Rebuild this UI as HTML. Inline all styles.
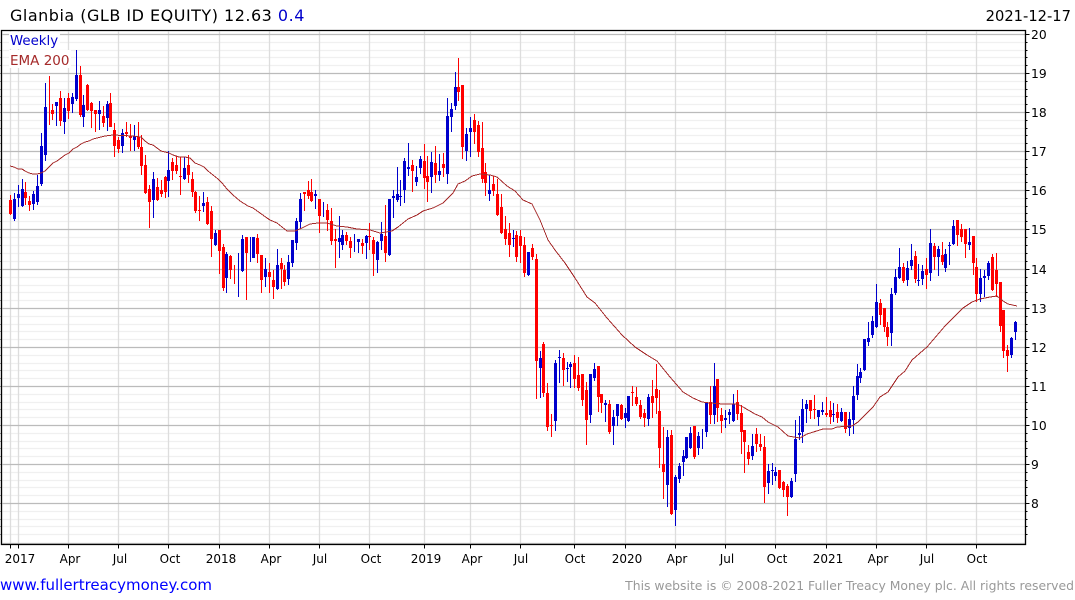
<!DOCTYPE html>
<html><head><meta charset="utf-8"><title>Glanbia</title>
<style>
html,body{margin:0;padding:0;background:#fff}
svg{display:block}
text{font-family:"DejaVu Sans","Liberation Sans",sans-serif}
</style></head><body>
<svg width="1075" height="600" viewBox="0 0 1075 600" xmlns="http://www.w3.org/2000/svg">
<rect width="1075" height="600" fill="#fff"/>
<g fill="none" stroke-width="1.33" transform="translate(.5 .5)">
<path stroke="#f0f0f0" d="M2 42H1025M2 50H1025M2 57H1025M2 65H1025M2 81H1025M2 89H1025M2 96H1025M2 104H1025M2 120H1025M2 128H1025M2 135H1025M2 143H1025M2 159H1025M2 167H1025M2 174H1025M2 182H1025M2 198H1025M2 206H1025M2 213H1025M2 221H1025M2 237H1025M2 245H1025M2 253H1025M2 261H1025M2 277H1025M2 285H1025M2 292H1025M2 300H1025M2 316H1025M2 324H1025M2 331H1025M2 339H1025M2 355H1025M2 363H1025M2 370H1025M2 378H1025M2 394H1025M2 402H1025M2 409H1025M2 417H1025M2 433H1025M2 441H1025M2 448H1025M2 456H1025M2 472H1025M2 480H1025M2 487H1025M2 495H1025M2 511H1025M2 519H1025M2 526H1025M2 534H1025"/>
<path stroke="#ddd" d="M10 31V543M18 31V543M68 31V543M118 31V543M168 31V543M219 31V543M269 31V543M319 31V543M369 31V543M424 31V543M470 31V543M520 31V543M574 31V543M625 31V543M675 31V543M725 31V543M775 31V543M826 31V543M876 31V543M926 31V543M976 31V543"/>
<path stroke="#bbb" d="M2 34H1025M2 73H1025M2 112H1025M2 151H1025M2 190H1025M2 229H1025M2 269H1025M2 308H1025M2 347H1025M2 386H1025M2 425H1025M2 464H1025M2 503H1025M2 543H1025"/>
</g>
<rect x="9" y="32" width="51" height="17" fill="#fff"/>
<rect x="9" y="50" width="62" height="18" fill="#fff"/>
<g shape-rendering="crispEdges" fill="none" transform="translate(.5 0)">
<path stroke="#f00" d="M10 195V215M25 182V205M29 196V211M49 76V125M52 104V120M60 91V126M68 93V119M80 66V117M87 84V111M91 102V128M95 110V132M103 106V127M110 93V127M114 123V157M118 137V153M126 122V137M130 124V151M138 122V149M141 135V175M145 155V194M149 185V228M157 178V201M161 180V197M165 176V198M172 158V180M176 156V174M180 157V195M188 155V183M192 172V197M195 191V213M199 196V221M207 197V225M211 206V257M219 230V274M223 244V291M230 255V279M234 265V284M246 237V300M257 234V263M261 255V293M269 263V293M273 270V299M281 258V289M284 265V286M304 192V211M308 181V199M311 179V202M319 199V233M327 204V231M331 208V245M335 229V268M346 232V245M350 237V258M362 239V254M369 223V250M373 237V276M385 205V262M412 160V192M424 144V189M427 156V202M435 146V183M443 153V177M458 58V101M462 85V159M474 114V144M478 121V157M482 122V183M485 163V196M493 176V196M497 179V216M501 194V234M505 216V245M509 223V257M516 231V262M520 230V263M524 237V277M532 244V260M536 254V399M543 342V397M547 383V431M551 414V437M563 353V386M574 355V388M578 357V391M582 374V406M586 382V445M598 366V412M601 394V413M609 400V434M621 404V420M632 386V406M636 387V406M640 400V419M644 409V427M652 380V418M656 364V414M659 390V468M663 427V499M671 430V515M694 426V459M710 386V424M717 379V422M721 408V433M737 390V420M741 405V454M744 430V473M748 445V465M756 428V452M760 434V451M764 436V503M779 470V489M783 481V497M787 484V516M810 400V419M814 395V419M826 397V417M830 401V424M837 404V423M845 412V433M880 299V325M884 308V332M887 322V346M903 263V283M915 251V283M926 258V289M934 243V270M942 242V265M957 220V246M961 224V242M965 229V258M973 236V275M976 258V302M992 254V291M996 253V297M1000 282V332M1003 310V358M1007 345V372"/>
<path stroke="#f00" stroke-width="3" d="M10 200V214M25 192V198M29 201V205M52 110V114M60 98V121M68 98V111M80 75V115M87 85V110M91 103V111M95 110V114M103 116V123M110 103V127M114 130V146M118 140V149M126 132V134M130 136V138M138 137V147M141 147V166M145 165V193M149 189V202M157 187V200M161 190V194M165 177V192M172 162V171M176 165V171M180 176V177M188 165V175M192 179V192M195 192V211M199 210V211M207 202V224M211 211V239M219 230V251M223 247V288M230 256V270M246 237V253M257 238V254M261 255V280M269 272V277M273 280V287M281 263V269M284 270V282M304 192V194M308 190V196M311 192V201M319 199V216M327 210V220M331 221V241M335 239V241M346 235V241M350 241V248M362 243V246M369 236V237M373 240V254M385 236V253M412 165V171M424 161V178M427 176V182M435 163V175M443 164V168M458 87V92M462 85V147M474 120V132M478 125V152M482 148V179M485 172V183M493 184V191M497 194V215M501 207V233M505 229V239M509 233V245M516 235V257M520 236V246M524 245V273M532 248V257M536 259V361M543 344V393M547 393V427M551 425V426M563 358V370M574 363V379M578 375V388M582 374V400M586 390V420M598 366V397M601 394V403M609 404V432M621 405V419M632 392V393M636 397V404M640 405V417M644 413V418M652 396V403M656 389V398M659 411V448M663 464V472M671 435V514M694 426V457M710 402V415M717 379V408M721 415V421M737 402V414M741 413V432M744 430V442M748 452V459M756 434V444M760 444V447M764 447V487M779 470V488M783 482V490M787 486V497M810 400V411M814 409V410M826 413V415M830 410V417M837 412V418M845 412V429M880 303V315M884 308V327M887 327V337M903 267V281M915 256V279M926 269V275M934 246V257M942 255V262M957 220V235M961 229V237M965 229V244M973 236V263M976 267V294M992 257V290M996 270V284M1000 282V326M1003 310V351M1007 350V356"/>
<path stroke="#00c" d="M14 193V221M18 185V207M22 179V207M33 191V210M37 175V205M41 133V186M45 83V161M56 102V126M64 98V134M72 93V113M76 50V101M83 95V127M99 101V130M107 101V131M122 129V153M134 125V151M153 172V218M168 151V197M184 157V180M203 192V212M215 230V246M226 252V293M238 253V297M242 235V272M250 237V262M253 237V258M265 258V287M277 249V290M288 255V285M292 240V267M296 218V250M300 193V229M315 190V209M323 202V217M339 216V258M342 230V250M354 234V252M358 239V253M366 235V259M377 241V273M381 222V250M389 199V256M393 190V218M397 167V202M400 180V206M404 158V203M408 143V176M416 166V186M420 156V174M431 152V193M439 154V181M447 98V184M451 103V132M455 72V110M466 128V161M470 117V157M489 175V201M513 230V247M528 252V276M540 351V398M555 360V431M559 350V383M567 362V382M570 362V388M590 374V423M594 363V381M605 400V422M613 410V445M617 404V426M625 408V428M628 396V422M648 394V426M667 430V507M675 475V526M679 463V483M683 450V476M686 437V459M690 427V449M698 432V455M702 429V449M706 402V437M714 363V424M725 410V428M729 409V424M733 394V422M752 434V460M768 464V494M772 463V485M775 467V481M791 478V498M795 420V482M799 416V440M802 399V443M806 400V423M818 410V426M822 402V415M833 403V422M841 408V422M849 412V436M853 386V434M857 364V400M860 368V383M864 339V371M868 322V346M872 316V338M876 284V328M891 288V346M895 269V295M899 248V279M907 261V286M911 244V270M918 264V286M922 265V285M930 229V281M938 246V276M945 249V272M949 242V265M953 220V245M969 228V250M980 269V302M984 270V297M988 261V280M1011 337V358M1015 321V340"/>
<path stroke="#00c" stroke-width="3" d="M14 199V219M18 194V198M22 189V206M33 194V204M37 186V202M41 146V184M45 107V155M56 102V106M64 108V122M72 97V104M76 75V99M83 105V117M99 110V114M107 104V118M122 133V146M134 136V140M153 179V200M168 170V181M184 168V179M203 203V206M215 233V245M226 254V278M242 239V271M253 237V258M265 269V277M277 265V289M288 262V279M292 240V263M296 221V243M300 199V222M315 194V196M339 238V242M342 235V245M358 239V242M366 236V243M377 242V260M381 234V241M389 199V255M393 196V198M397 194V200M400 196V197M404 161V190M408 167V169M416 177V182M420 159V168M431 162V177M439 171V175M447 116V174M451 109V117M455 87V106M466 134V151M470 128V132M489 190V194M513 238V239M528 252V275M540 358V368M555 363V421M559 357V358M567 368V369M570 364V367M590 374V415M594 369V378M605 403V405M613 417V426M617 404V416M625 413V418M628 396V421M648 397V419M667 437V485M675 477V510M679 466V479M683 456V462M686 437V458M690 433V448M698 436V448M706 403V432M714 386V415M725 418V420M729 412V415M733 404V421M752 446V456M768 471V483M772 470V471M775 472V476M791 481V497M795 439V474M799 433V435M802 409V432M806 404V409M818 410V417M822 410V412M833 414V415M841 412V421M849 419V428M853 396V420M857 376V395M860 372V378M864 339V370M868 338V342M872 321V335M876 302V327M891 294V333M895 277V293M899 267V278M907 268V280M911 260V266M918 280V281M922 271V279M930 243V273M938 249V257M945 254V268M949 245V246M953 226V244M969 242V245M980 278V294M984 276V278M988 263V276M1011 338V355M1015 322V332"/>
</g>
<g shape-rendering="crispEdges" fill="none">
<polyline stroke="#a52a2a" stroke-width="1" points="10,166 14,167 18,169 22,169 25,171 29,173 33,174 37,174 41,173 45,171 49,167 53,163 57,161 61,158 65,155 69,153 73,149 77,147 81,144 85,142 89,141 93,139 97,138 101,137 105,136 113,135 133,136 141,137 145,141 149,144 153,145 157,148 161,151 165,152 169,153 173,155 179,157 185,157 190,158 195,163 200,165 204,167 208,171 213,175 218,179 222,183 227,189 233,195 240,201 248,206 253,208 260,213 267,218 270,220 277,223 282,227 287,231 295,231 302,228 310,224 318,223 327,223 337,226 347,227 357,229 370,230 380,233 392,231 398,227 408,219 417,215 423,211 433,208 443,203 448,198 453,193 458,184 465,181 472,176 480,174 490,175 497,177 507,186 515,191 523,200 532,204 540,220 548,240 555,250 565,263 575,278 587,297 595,303 607,318 622,335 635,347 647,355 657,361 670,377 683,392 693,398 702,402 710,403 723,404 737,404 743,407 755,414 762,417 768,422 778,427 788,436 800,438 807,434 823,429 832,429 837,427 852,426 858,422 873,407 880,397 888,392 898,377 905,371 912,360 927,347 945,326 963,308 972,302 980,299 990,297 997,296 1003,301 1008,304 1017,306"/>
</g>
<g fill="none" stroke="#000" transform="translate(.5 .5)">
<path stroke-width="1.33" d="M1 30H1025V544H1V30Z"/>
<g shape-rendering="crispEdges">
<path d="M0 42H1M0 50H1M0 57H1M0 65H1M0 73H1M0 81H1M0 89H1M0 96H1M0 104H1M0 112H1M0 120H1M0 128H1M0 135H1M0 143H1M0 151H1M0 159H1M0 167H1M0 174H1M0 182H1M0 190H1M0 198H1M0 206H1M0 213H1M0 221H1M0 229H1M0 237H1M0 245H1M0 253H1M0 261H1M0 269H1M0 277H1M0 285H1M0 292H1M0 300H1M0 308H1M0 316H1M0 324H1M0 331H1M0 339H1M0 347H1M0 355H1M0 363H1M0 370H1M0 378H1M0 386H1M0 394H1M0 402H1M0 409H1M0 417H1M0 425H1M0 433H1M0 441H1M0 448H1M0 456H1M0 464H1M0 472H1M0 480H1M0 487H1M0 495H1M0 503H1M0 511H1M0 519H1M0 526H1M0 534H1"/>
<path d="M1025 34H1029M1025 73H1029M1025 112H1029M1025 151H1029M1025 190H1029M1025 229H1029M1025 269H1029M1025 308H1029M1025 347H1029M1025 386H1029M1025 425H1029M1025 464H1029M1025 503H1029"/>
<path d="M1025 42H1027M1025 50H1027M1025 57H1027M1025 65H1027M1025 81H1027M1025 89H1027M1025 96H1027M1025 104H1027M1025 120H1027M1025 128H1027M1025 135H1027M1025 143H1027M1025 159H1027M1025 167H1027M1025 174H1027M1025 182H1027M1025 198H1027M1025 206H1027M1025 213H1027M1025 221H1027M1025 237H1027M1025 245H1027M1025 253H1027M1025 261H1027M1025 277H1027M1025 285H1027M1025 292H1027M1025 300H1027M1025 316H1027M1025 324H1027M1025 331H1027M1025 339H1027M1025 355H1027M1025 363H1027M1025 370H1027M1025 378H1027M1025 394H1027M1025 402H1027M1025 409H1027M1025 417H1027M1025 433H1027M1025 441H1027M1025 448H1027M1025 456H1027M1025 472H1027M1025 480H1027M1025 487H1027M1025 495H1027M1025 511H1027M1025 519H1027M1025 526H1027M1025 534H1027"/>
<path d="M10 544V548M18 544V548M68 544V548M118 544V548M168 544V548M219 544V548M269 544V548M319 544V548M369 544V548M424 544V548M470 544V548M520 544V548M574 544V548M625 544V548M675 544V548M725 544V548M775 544V548M826 544V548M876 544V548M926 544V548M976 544V548"/>
</g>
</g>
<text x="10" y="21" font-size="16" fill="#000" letter-spacing=".5">Glanbia (GLB ID EQUITY) 12.63 <tspan fill="#00c">0.4</tspan></text>
<text x="1071" y="21" font-size="14.7" fill="#000" text-anchor="end">2021-12-17</text>
<text x="10" y="45" font-size="13.33" fill="#00c">Weekly</text>
<text x="10" y="65" font-size="13.5" fill="#a52a2a">EMA 200</text>
<g font-size="12.3" fill="#000">
<text x="1031" y="39">20</text><text x="1031" y="78">19</text><text x="1031" y="117">18</text><text x="1031" y="156">17</text><text x="1031" y="195">16</text><text x="1031" y="234">15</text><text x="1031" y="274">14</text><text x="1031" y="313">13</text><text x="1031" y="352">12</text><text x="1031" y="391">11</text><text x="1031" y="430">10</text><text x="1031" y="469">9</text><text x="1031" y="508">8</text>
</g>
<g font-size="12" fill="#000" text-anchor="middle">
<text x="20" y="563">2017</text><text x="70" y="563">Apr</text><text x="120" y="563">Jul</text><text x="170" y="563">Oct</text><text x="221" y="563">2018</text><text x="271" y="563">Apr</text><text x="320" y="563">Jul</text><text x="371" y="563">Oct</text><text x="426" y="563">2019</text><text x="472" y="563">Apr</text><text x="521" y="563">Jul</text><text x="575" y="563">Oct</text><text x="627" y="563">2020</text><text x="677" y="563">Apr</text><text x="727" y="563">Jul</text><text x="777" y="563">Oct</text><text x="828" y="563">2021</text><text x="878" y="563">Apr</text><text x="927" y="563">Jul</text><text x="977" y="563">Oct</text>
</g>
<text x="0" y="590" font-size="15" fill="#00f">www.fullertreacymoney.com</text>
<text x="1074" y="590" font-size="12.4" fill="#999" text-anchor="end">This website is © 2008-2021 Fuller Treacy Money plc. All rights reserved</text>
</svg>
</body></html>
